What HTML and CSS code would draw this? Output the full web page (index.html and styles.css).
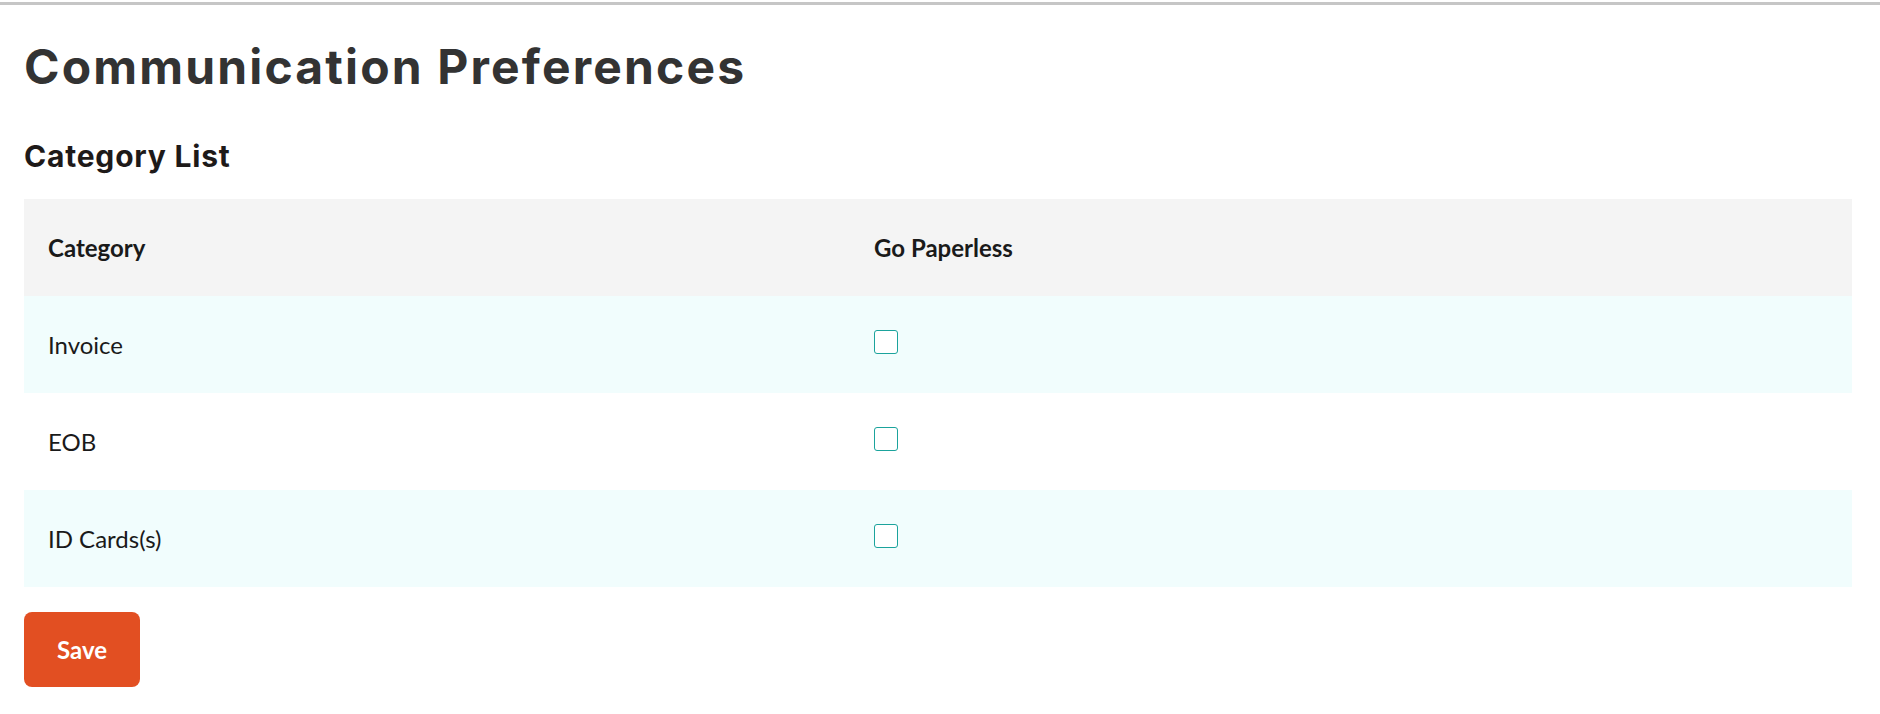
FILE: index.html
```html
<!DOCTYPE html>
<html lang="en">
<head>
    <meta charset="UTF-8">
    <meta name="viewport" content="width=device-width, initial-scale=1.0">
    <title>Communication Preferences</title>
    <link rel="stylesheet" href="styles.css">
</head>
<body>
    <div class="top-bar"></div>
    <div class="page">
        <h1 class="page-title">Communication Preferences</h1>
        <h2 class="section-title">Category List</h2>
        <table class="category-table">
            <thead>
                <tr>
                    <th class="col-category">Category</th>
                    <th>Go Paperless</th>
                </tr>
            </thead>
            <tbody>
                <tr>
                    <td>Invoice</td>
                    <td><input type="checkbox" class="paperless-check"></td>
                </tr>
                <tr>
                    <td>EOB</td>
                    <td><input type="checkbox" class="paperless-check"></td>
                </tr>
                <tr>
                    <td>ID Cards(s)</td>
                    <td><input type="checkbox" class="paperless-check"></td>
                </tr>
            </tbody>
        </table>
        <button class="save-button">Save</button>
    </div>
</body>
</html>
```

FILE: styles.css
```css
body {
    margin: 0;
    padding-top: 2px;
    background-color: white;
    font-family: Lato, "Open Sans", sans-serif;
}
.top-bar {
    height: 3px;
    background-color: #c6c6c6;
}
.page {
    padding: 0 28px 0 24px;
}
.page-title {
    font-family: Inter, "Open Sans", sans-serif;
    font-weight: 700;
    font-size: 48px;
    line-height: 58px;
    letter-spacing: 2.15px;
    color: #333;
    margin: 33px 0 0;
}
.section-title {
    font-family: Inter, "Open Sans", sans-serif;
    font-weight: 700;
    font-size: 30px;
    line-height: 36px;
    letter-spacing: 0.8px;
    color: #1e1a19;
    margin: 42px 0 25px;
}
.category-table {
    width: 100%;
    border-collapse: collapse;
}
.category-table th,
.category-table td {
    text-align: left;
    font-size: 24px;
    line-height: 29px;
    padding: 34px 24px;
    color: #1a1a1a;
}
.category-table th {
    font-weight: 700;
    background-color: #f4f4f4;
}
.category-table td {
    font-weight: 400;
}
.col-category {
    width: 778px;
}
.category-table tbody tr:nth-child(odd) {
    background-color: #f1fdfd;
}
.paperless-check {
    appearance: none;
    -webkit-appearance: none;
    width: 24px;
    height: 24px;
    margin: 0;
    vertical-align: top;
    border: 1px solid #1ba39c;
    border-radius: 3px;
    background: white;
}
.save-button {
    margin-top: 25px;
    background-color: #e24f22;
    color: white;
    border: none;
    border-radius: 8px;
    font-family: Lato, sans-serif;
    font-weight: 700;
    font-size: 24px;
    line-height: 29px;
    padding: 23px 33px;
    cursor: pointer;
}
```
